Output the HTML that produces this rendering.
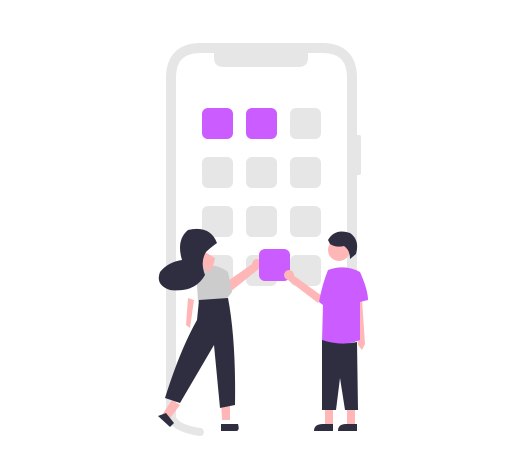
<!DOCTYPE html>
<html><head><style>html,body{margin:0;padding:0;background:#fff;}svg{display:block}</style></head>
<body>
<svg width="524" height="476" viewBox="0 0 524 476" xmlns="http://www.w3.org/2000/svg">
<!-- phone -->
<path d="M171 420 L171 78 Q171 48 201 48 L322 48 Q352 48 352 78 L352 300" fill="none" stroke="#e6e6e6" stroke-width="10"/>
<path d="M171 415 Q173 428 200 432" fill="none" stroke="#e6e6e6" stroke-width="8" stroke-linecap="round"/>
<path d="M214 44 L308 44 L308 58 Q308 67 298 67 L224 67 Q214 67 214 58 Z" fill="#e6e6e6"/>
<rect x="355" y="135" width="6" height="40" rx="2" fill="#e6e6e6"/>
<!-- apps -->
<g fill="#e6e6e6">
<rect x="202" y="108" width="31" height="31" rx="6" fill="#cb5cff"/>
<rect x="246" y="108" width="31" height="31" rx="6" fill="#cb5cff"/>
<rect x="290" y="108" width="31" height="31" rx="6"/>
<rect x="202" y="157" width="31" height="31" rx="6"/>
<rect x="246" y="157" width="31" height="31" rx="6"/>
<rect x="290" y="157" width="31" height="31" rx="6"/>
<rect x="202" y="206" width="31" height="31" rx="6"/>
<rect x="246" y="206" width="31" height="31" rx="6"/>
<rect x="290" y="206" width="31" height="31" rx="6"/>
<rect x="202" y="255" width="31" height="31" rx="6"/>
<rect x="246" y="255" width="31" height="31" rx="6"/>
<rect x="290" y="255" width="31" height="31" rx="6"/>
</g>
<!-- woman -->
<path d="M188 298 L186 325 L190 328 L194 300 Z" fill="#ffb6b6"/>
<path d="M172 400 L162 415 L170 418 L180 405 Z" fill="#ffb6b6"/>
<path d="M221 400 L222 420 L230 420 L230 400 Z" fill="#ffb6b6"/>
<path d="M225 283 L255 262 L260 268 L230 292 Z" fill="#ffb6b6"/>
<circle cx="257" cy="264" r="5" fill="#ffb6b6"/>
<path d="M196 266 Q215 262 228 272 L232 292 L222 305 L198 302 Z" fill="#ccc"/>
<path d="M199 300 L228 298 Q236 340 235 405 L220 408 L214 345 L180 403 L165 398 Q180 350 197 320 Z" fill="#2f2e41"/>
<path d="M158 416 L170 427 L174 423 L166 413 Z" fill="#2f2e41"/>
<path d="M221 424 L238 424 Q240 431 236 431 L221 431 Z" fill="#2f2e41"/>
<path d="M215 258 Q212 275 205 270 Q200 262 205 252 Z" fill="#ffb6b6"/>
<path d="M188 230 Q210 225 217 243 Q210 248 206 252 Q200 262 205 275 Q195 293 170 290 Q155 285 160 272 Q168 262 182 260 Q176 240 188 230 Z" fill="#2f2e41"/>
<!-- held square -->
<rect x="259" y="249" width="31" height="32" rx="6" fill="#cb5cff"/>
<!-- man -->
<path d="M293 275 L322 296 L318 303 L288 280 Z" fill="#ffb6b6"/>
<circle cx="289" cy="275" r="5" fill="#ffb6b6"/>
<circle cx="339" cy="250" r="11" fill="#ffb6b6"/>
<path d="M328 240 Q335 228 350 233 Q360 240 356 254 L350 259 Q350 250 344 246 Q336 248 330 244 Z" fill="#2f2e41"/>
<path d="M356 300 L358 345 L362 350 L365 344 L362 300 Z" fill="#ffb6b6"/>
<path d="M328 270 Q345 264 360 272 Q368 290 368 300 L360 302 L360 340 Q340 348 322 342 L323 305 L319 302 Q322 285 328 270 Z" fill="#cb5cff"/>
<path d="M322 340 Q340 346 357 342 L358 410 L345 410 L340 378 L336 410 L322 410 Z" fill="#2f2e41"/>
<path d="M325 410 L333 410 L333 425 L325 425 Z" fill="#ffb6b6"/>
<path d="M347 410 L355 410 L355 425 L347 425 Z" fill="#ffb6b6"/>
<path d="M314 431 Q314 424 323 424 L333 424 L333 431 Z" fill="#2f2e41"/>
<path d="M338 431 Q338 424 346 424 L357 424 L357 431 Z" fill="#2f2e41"/>
</svg>
</body></html>
